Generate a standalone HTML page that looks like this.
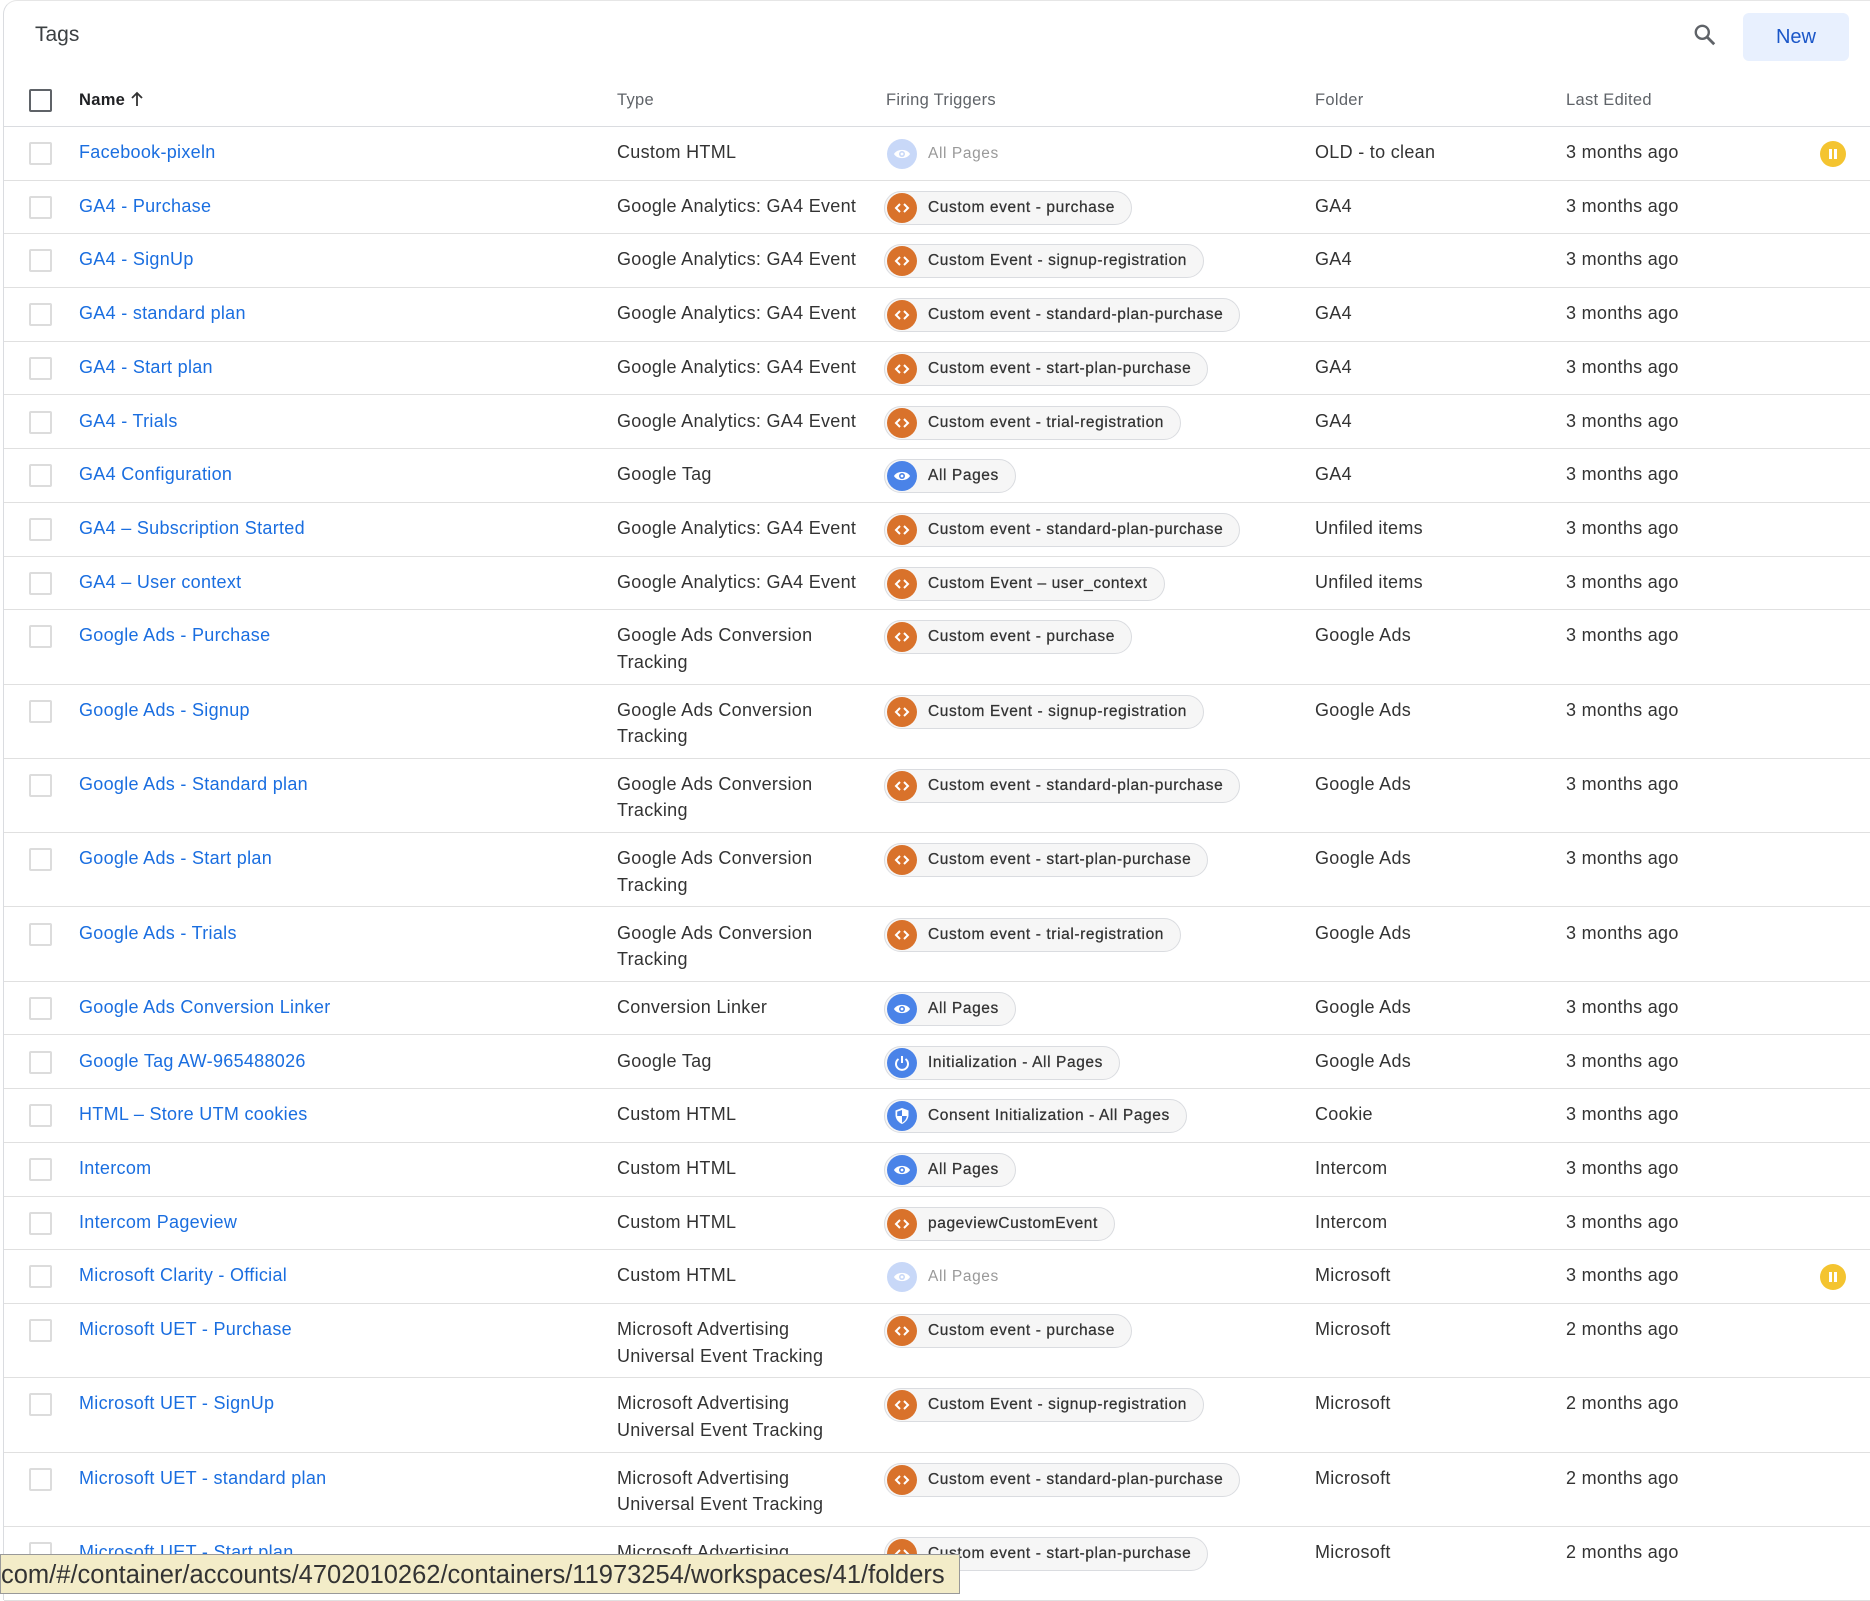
<!DOCTYPE html>
<html><head><meta charset="utf-8"><style>
*{box-sizing:border-box;margin:0;padding:0}
body{width:1870px;height:1586px;overflow:hidden;background:#fff;font-family:"Liberation Sans",Arial,sans-serif;color:#202124;position:relative}
.frame{position:absolute;left:3px;top:0;width:1900px;height:1600px;border-left:1px solid #dadce0;border-top:1px solid #e6e6e6;border-top-left-radius:14px}
.title{position:absolute;left:35px;top:23px;font-size:21px;color:#3c4043}
.new{position:absolute;left:1743px;top:13px;width:106px;height:48px;background:#e8f0fe;border-radius:6px;color:#1a56c8;font-size:20px;text-align:center;line-height:48px}
.hdr{position:absolute;left:4px;top:80px;width:1866px;height:47px;border-bottom:1px solid #dadce0;font-size:16.5px;letter-spacing:0.3px;color:#5f6368}
.hdr span{position:absolute;top:11px}
.row{position:absolute;left:4px;width:1866px;border-bottom:1px solid #e0e0e0;font-size:18px;letter-spacing:0.3px}
.cb{position:absolute;left:25px;top:15px;width:23px;height:23px;border:2px solid #dcdcdc;border-radius:2px}
.nm{position:absolute;left:75px;top:15px;color:#1a6ee0}
.ty{position:absolute;left:613px;top:15px;line-height:26.5px;margin-top:-3px;color:#333}
.fo{position:absolute;left:1311px;top:15px;color:#333}
.le{position:absolute;left:1562px;top:15px;color:#333}
.chip{position:absolute;left:880px;top:10px;height:34px;border:1px solid #dadce0;background:#f6f6f6;border-radius:17px;padding:0 16px 0 43px;font-size:15.5px;letter-spacing:0.6px;line-height:32px;color:#333;white-space:nowrap;-webkit-text-stroke:0.25px #333}
.chip i{position:absolute;left:2px;top:1px;width:30px;height:30px;border-radius:50%;background:#d9722b;display:flex;align-items:center;justify-content:center}
.chip.b i{background:#4a83e8}
.chip.d{border-color:transparent;background:transparent;color:#999;-webkit-text-stroke:0}
.chip.d i{background:#c8d8f8}
.pause{position:absolute;left:1816px;top:14px;width:26px;height:26px;border-radius:50%;background:#f4c430}
.pause:before,.pause:after{content:"";position:absolute;top:8px;width:3px;height:10px;background:#fff}
.pause:before{left:9px}.pause:after{left:14px}
.tip{position:absolute;left:0;top:1554px;width:960px;height:40px;background:#f3ecc8;border:1px solid #999;font-size:25.5px;color:#333;line-height:30px;padding-top:5px;white-space:nowrap;overflow:hidden}
</style></head><body>
<div class="frame"></div>
<div class="title">Tags</div>
<svg style="position:absolute;left:1692px;top:22px" width="26" height="26" viewBox="0 0 24 24"><circle cx="9.5" cy="9.5" r="6" fill="none" stroke="#5f6368" stroke-width="2.2"/><path d="M14 14l6.5 6.5" stroke="#5f6368" stroke-width="2.6"/></svg>
<div class="new">New</div>
<div class="hdr">
<div class="cb" style="top:9px;border-color:#5f6368"></div>
<span style="left:75px;color:#202124;font-weight:bold">Name <svg width="14" height="16" viewBox="0 0 14 16" style="vertical-align:-2px"><path d="M7 15V2M2 7l5-5 5 5" fill="none" stroke="#333" stroke-width="1.8"/></svg></span>
<span style="left:613px">Type</span><span style="left:882px">Firing Triggers</span><span style="left:1311px">Folder</span><span style="left:1562px">Last Edited</span>
</div>
<div id="rows"></div>
<div class="tip">com/#/container/accounts/4702010262/containers/11973254/workspaces/41/folders</div>
<script>
var C='<svg width="16" height="14" viewBox="0 0 16 14"><path d="M6 3L2 7l4 4M10 3l4 4-4 4" fill="none" stroke="#fff" stroke-width="2"/></svg>';
var E='<svg width="18" height="14" viewBox="0 0 18 14"><path d="M1 7C4 1.5 14 1.5 17 7 14 12.5 4 12.5 1 7z" fill="#fff"/><circle cx="9" cy="7" r="3" fill="#4a83e8"/><circle cx="9" cy="7" r="1.4" fill="#fff"/></svg>';
var ED='<svg width="18" height="14" viewBox="0 0 18 14"><path d="M1 7C4 1.5 14 1.5 17 7 14 12.5 4 12.5 1 7z" fill="#fff"/><circle cx="9" cy="7" r="3" fill="#c8d8f8"/><circle cx="9" cy="7" r="1.4" fill="#fff"/></svg>';
var P='<svg width="18" height="18" viewBox="0 0 18 18"><path d="M5.5 5A6 6 0 1 0 12.5 5" fill="none" stroke="#fff" stroke-width="2"/><path d="M9 2v7" stroke="#fff" stroke-width="2"/></svg>';
var S='<svg width="16" height="18" viewBox="0 0 16 18"><path d="M8 1L1.5 3.5V8c0 4 3 7.5 6.5 9 3.5-1.5 6.5-5 6.5-9V3.5z" fill="#fff"/><path d="M8 3v6H3.2V8c0-.2 0-.4 0-.6V4.6L8 3zM8 9h4.8c-.3 3-2.300 5.6-4.8 6.8z" fill="#4a83e8"/></svg>';
var GA='Google Analytics: GA4 Event',AD='Google Ads Conversion<br>Tracking',MS='Microsoft Advertising<br>Universal Event Tracking',H='Custom HTML';
var R=[
['Facebook-pixeln',H,'d','All Pages','OLD - to clean','3 months ago',1],
['GA4 - Purchase',GA,'o','Custom event - purchase','GA4','3 months ago'],
['GA4 - SignUp',GA,'o','Custom Event - signup-registration','GA4','3 months ago'],
['GA4 - standard plan',GA,'o','Custom event - standard-plan-purchase','GA4','3 months ago'],
['GA4 - Start plan',GA,'o','Custom event - start-plan-purchase','GA4','3 months ago'],
['GA4 - Trials',GA,'o','Custom event - trial-registration','GA4','3 months ago'],
['GA4 Configuration','Google Tag','e','All Pages','GA4','3 months ago'],
['GA4 – Subscription Started',GA,'o','Custom event - standard-plan-purchase','Unfiled items','3 months ago'],
['GA4 – User context',GA,'o','Custom Event – user_context','Unfiled items','3 months ago'],
['Google Ads - Purchase',AD,'o','Custom event - purchase','Google Ads','3 months ago'],
['Google Ads - Signup',AD,'o','Custom Event - signup-registration','Google Ads','3 months ago'],
['Google Ads - Standard plan',AD,'o','Custom event - standard-plan-purchase','Google Ads','3 months ago'],
['Google Ads - Start plan',AD,'o','Custom event - start-plan-purchase','Google Ads','3 months ago'],
['Google Ads - Trials',AD,'o','Custom event - trial-registration','Google Ads','3 months ago'],
['Google Ads Conversion Linker','Conversion Linker','e','All Pages','Google Ads','3 months ago'],
['Google Tag AW-965488026','Google Tag','p','Initialization - All Pages','Google Ads','3 months ago'],
['HTML – Store UTM cookies',H,'s','Consent Initialization - All Pages','Cookie','3 months ago'],
['Intercom',H,'e','All Pages','Intercom','3 months ago'],
['Intercom Pageview',H,'o','pageviewCustomEvent','Intercom','3 months ago'],
['Microsoft Clarity - Official',H,'d','All Pages','Microsoft','3 months ago',1],
['Microsoft UET - Purchase',MS,'o','Custom event - purchase','Microsoft','2 months ago'],
['Microsoft UET - SignUp',MS,'o','Custom Event - signup-registration','Microsoft','2 months ago'],
['Microsoft UET - standard plan',MS,'o','Custom event - standard-plan-purchase','Microsoft','2 months ago'],
['Microsoft UET - Start plan',MS,'o','Custom event - start-plan-purchase','Microsoft','2 months ago']];
var y=127,h='';
R.forEach(function(r){var dbl=r[1].indexOf('<br>')>0,ht=dbl?74.3:53.7;
var cls=r[2]=='o'?'':r[2]=='d'?' b d':' b',ic=r[2]=='o'?C:r[2]=='d'?ED:r[2]=='p'?P:r[2]=='s'?S:E;
h+='<div class="row" style="top:'+y+'px;height:'+ht+'px"><div class="cb"></div><div class="nm">'+r[0]+'</div><div class="ty">'+r[1]+'</div><div class="chip'+cls+'"><i>'+ic+'</i>'+r[3]+'</div><div class="fo">'+r[4]+'</div><div class="le">'+r[5]+'</div>'+(r[6]?'<div class="pause"></div>':'')+'</div>';
y+=ht;});
document.getElementById('rows').innerHTML=h;
</script>
</body></html>
